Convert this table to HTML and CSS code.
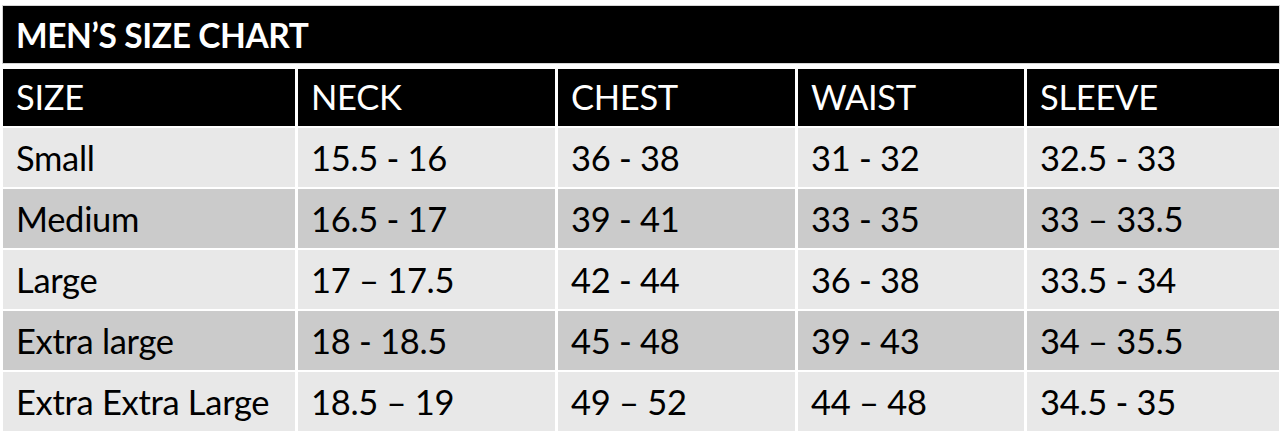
FILE: index.html
```html
<!DOCTYPE html>
<html lang="en">
<head>
<meta charset="utf-8">
<title>Men's Size Chart</title>
<link rel="stylesheet" href="styles.css">
</head>
<body>
<div class="chart">
  <div class="title">MEN’S SIZE CHART</div>
  <div class="grid">
    <div class="cell head">SIZE</div>
    <div class="cell head">NECK</div>
    <div class="cell head">CHEST</div>
    <div class="cell head">WAIST</div>
    <div class="cell head">SLEEVE</div>

    <div class="cell light">Small</div>
    <div class="cell light">15.5 - 16</div>
    <div class="cell light">36 - 38</div>
    <div class="cell light">31 - 32</div>
    <div class="cell light">32.5 - 33</div>

    <div class="cell dark">Medium</div>
    <div class="cell dark">16.5 - 17</div>
    <div class="cell dark">39 - 41</div>
    <div class="cell dark">33 - 35</div>
    <div class="cell dark">33 – 33.5</div>

    <div class="cell light">Large</div>
    <div class="cell light">17 – 17.5</div>
    <div class="cell light">42 - 44</div>
    <div class="cell light">36 - 38</div>
    <div class="cell light">33.5 - 34</div>

    <div class="cell dark">Extra large</div>
    <div class="cell dark">18 - 18.5</div>
    <div class="cell dark">45 - 48</div>
    <div class="cell dark">39 - 43</div>
    <div class="cell dark">34 – 35.5</div>

    <div class="cell light">Extra Extra Large</div>
    <div class="cell light">18.5 – 19</div>
    <div class="cell light">49 – 52</div>
    <div class="cell light">44 – 48</div>
    <div class="cell light">34.5 - 35</div>
  </div>
</div>
</body>
</html>
```

FILE: styles.css
```css
html, body {
  margin: 0;
  padding: 0;
  background: #ffffff;
}

.chart {
  padding: 6px 6px 0 3px;
  font-family: Lato, "Open Sans", sans-serif;
}

.title {
  height: 57px;
  background: #000000;
  color: #ffffff;
  font-weight: 700;
  font-size: 33.5px;
  letter-spacing: -0.4px;
  display: flex;
  align-items: center;
  padding-left: 13px;
  margin-bottom: 6px;
  box-shadow: 0 0 0 1px #d4d4d4;
}

.grid {
  display: grid;
  grid-template-columns: 292px 257px 237px 226px 252px;
  grid-template-rows: 57px repeat(5, 59px);
  column-gap: 3px;
  row-gap: 2px;
}

.cell {
  display: flex;
  align-items: center;
  padding-left: 13px;
  font-size: 34.5px;
  letter-spacing: -0.3px;
  color: #000000;
}

.head {
  background: #000000;
  color: #ffffff;
  padding-bottom: 3px;
}

.light {
  background: #e8e8e8;
}

.dark {
  background: #cbcbcb;
}
```
